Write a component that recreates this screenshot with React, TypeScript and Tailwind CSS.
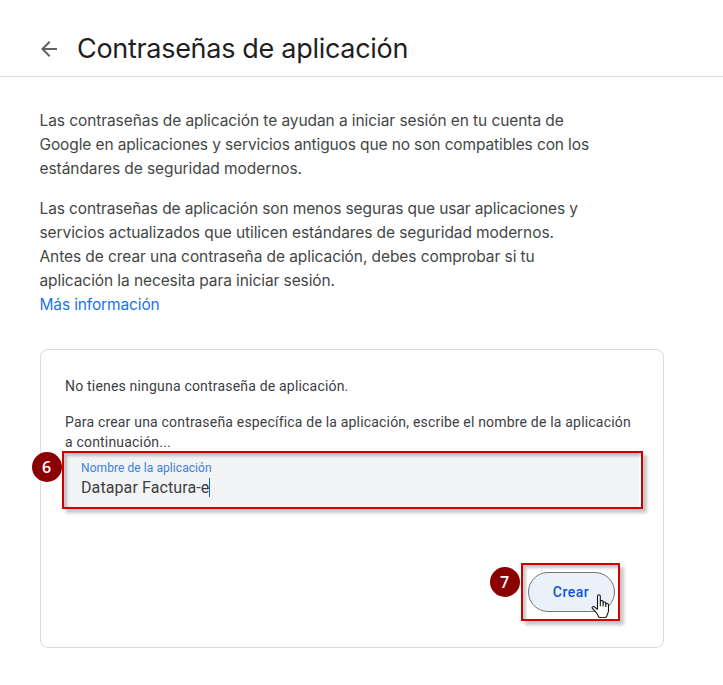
import type { ReactNode } from "react";

const INTRO = [
  { text: "Las contraseñas de aplicación te ayudan a iniciar sesión en tu cuenta de", fit: "tracking-[-0.08px]" },
  { text: "Google en aplicaciones y servicios antiguos que no son compatibles con los", fit: "tracking-[-0.12px]" },
  { text: "estándares de seguridad modernos.", fit: "tracking-[-0.07px]" },
];

const WARNING = [
  { text: "Las contraseñas de aplicación son menos seguras que usar aplicaciones y", fit: "tracking-[-0.12px]" },
  { text: "servicios actualizados que utilicen estándares de seguridad modernos.", fit: "tracking-[-0.09px]" },
  { text: "Antes de crear una contraseña de aplicación, debes comprobar si tu", fit: "tracking-[-0.08px]" },
  { text: "aplicación la necesita para iniciar sesión.", fit: "tracking-[-0.09px]" },
];

export default function App() {
  return (
    <div className="min-h-[685px] w-full overflow-hidden bg-white font-['Roboto',sans-serif] text-[#3c4043]">
      <header className="flex h-[77px] items-center border-b border-[#dadce0] pl-[37px] pt-[21px]">
        <BackArrow />
        <h1 className="ml-4 whitespace-nowrap font-['Inter',sans-serif] text-[27px] leading-9 tracking-[-0.3px] text-[#1f1f1f]">
          Contraseñas de aplicación
        </h1>
      </header>

      <main className="px-10 pt-8">
        <div className="-ml-[0.5px] space-y-4 font-['Inter',sans-serif] text-[15.5px] leading-6 text-[#444746]">
          <Paragraph lines={INTRO} />
          <div>
            <Paragraph lines={WARNING} />
            <a href="#" className="tracking-[-0.14px] text-[#1a73e8]">
              Más información
            </a>
          </div>
        </div>

        <section className="mt-8 h-[299px] w-[624px] rounded-lg border border-[#dadce0] px-6 pt-[26px] text-sm leading-5">
          <p className="whitespace-nowrap tracking-[0.19px]">No tienes ninguna contraseña de aplicación.</p>
          <p className="mt-4 whitespace-nowrap tracking-[0.19px]">
            Para crear una contraseña específica de la aplicación, escribe el nombre de la aplicación
            <br />a continuación...
          </p>

          {/* Name field */}
          <div className="relative h-14 w-[574px] bg-[#f1f3f4] pl-4 pt-[7px]">
            <div className="text-xs leading-[18px] tracking-[0.07px] text-[#3f7fde]">Nombre de la aplicación</div>
            <div className="mt-px flex items-center text-base leading-5 tracking-[0.1px]">
              Datapar Factura-e
              <span className="-mt-0.5 h-[19px] w-px bg-[#1a62c8]" />
            </div>
            <Highlight className="-left-[3px] -top-px h-[58px] w-[581px]" />
            <Step className="-left-[33.5px] -top-[0.5px]">6</Step>
          </div>

          <div className="mt-16 flex justify-end pr-6">
            <div className="relative">
              <button className="block h-10 w-[87px] rounded-full border border-[#747775] bg-[#ebf1fb] pr-px text-sm font-medium tracking-[0.5px] text-[#0b57d0]">
                Crear
              </button>
              <Highlight className="-left-[7px] -top-[9px] h-[58px] w-[99px]" />
              <Step className="-left-[38.5px] -top-[5.5px]">7</Step>
              <HandCursor />
            </div>
          </div>
        </section>
      </main>
    </div>
  );
}

function Paragraph({ lines }: { lines: { text: string; fit: string }[] }) {
  return (
    <p className="whitespace-nowrap">
      {lines.map((line) => (
        <span key={line.text} className="block">
          <span className={line.fit}>{line.text}</span>
        </span>
      ))}
    </p>
  );
}

/** Red frame around the control a step refers to. */
function Highlight({ className }: { className: string }) {
  return (
    <div
      className={`pointer-events-none absolute border-2 border-[#d00000] shadow-[4px_4px_3px_rgba(0,0,0,0.22),inset_3px_3px_3px_rgba(0,0,0,0.22)] ${className}`}
    />
  );
}

function Step({ className, children }: { className: string; children: ReactNode }) {
  return (
    <span
      className={`absolute flex h-[30px] w-[30px] items-center justify-center rounded-full bg-[#8b0000] font-['Open_Sans',sans-serif] text-base font-semibold text-white ${className}`}
    >
      {children}
    </span>
  );
}

function BackArrow() {
  return (
    <svg viewBox="0 0 24 24" className="h-6 w-6" fill="#5f6368">
      <path d="M20 11H7.83l5.59-5.59L12 4l-8 8 8 8 1.41-1.41L7.83 13H20v-2z" />
    </svg>
  );
}

function HandCursor() {
  return (
    <svg viewBox="0 0 19 24" className="absolute left-[63px] top-[22px] h-6 w-[19px]">
      <path
        d="M6.5 15.5V2.2c0-1.9 2.8-1.9 2.8 0v5.2c.3-1.2 2.8-1.1 2.8.4v.8c.4-1 2.7-.8 2.7.6v.8c.5-.9 2.7-.6 2.7.9v5.4c0 3.2-1.5 4.1-2.1 6.6-2 1.2-6 1.2-7.8 0C6.9 20 3.4 16.5 1.5 14.5c-1-1.3.6-2.6 1.9-1.7l3.1 2.7"
        fill="#fff"
        stroke="#111"
        strokeWidth="1.1"
        strokeLinejoin="round"
      />
      <path d="M9.3 7.5v4.7M12.1 8.6v3.9M14.8 10v3" fill="none" stroke="#111" strokeWidth="1.1" />
    </svg>
  );
}
